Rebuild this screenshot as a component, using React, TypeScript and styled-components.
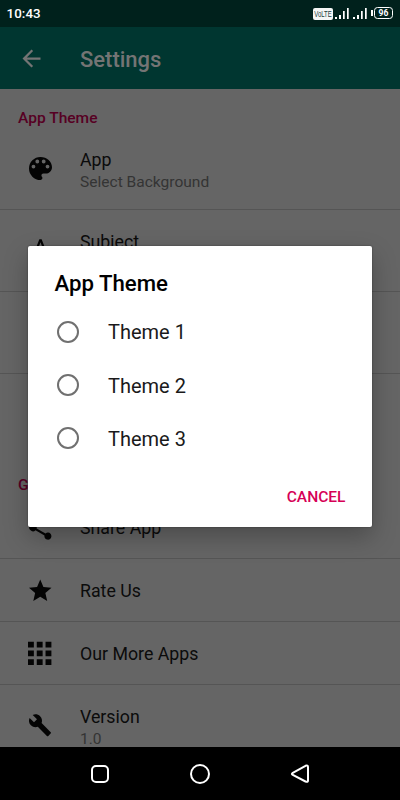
import React from "react";
import styled, { createGlobalStyle } from "styled-components";

const GlobalStyle = createGlobalStyle`
  *, *::before, *::after { box-sizing: border-box; }
  body { margin: 0; background: #656565; font-family: Roboto, sans-serif; overflow: hidden; }
`;

const Screen = styled.div`
  position: relative;
  display: flex;
  flex-direction: column;
  width: 400px;
  height: 800px;
  overflow: hidden;
  background: #656565;
`;

const StatusBar = styled.header`
  display: flex;
  align-items: center;
  justify-content: space-between;
  flex: none;
  height: 27px;
  padding: 0 7px 0 6.5px;
  background: #00211c;
`;

const Clock = styled.span`
  color: #fff;
  font-size: 13.3px;
  font-weight: 500;
  line-height: 27px;
  letter-spacing: 0.1px;
`;

const StatusIcons = styled.div`
  display: flex;
  align-items: center;
  height: 27px;
`;

const VolteBadge = styled.svg`
  width: 20px;
  height: 12px;
  margin-top: 1px;
  overflow: visible;
  font: 400 9px "Liberation Sans", sans-serif;
`;

const Signal = styled.svg`
  width: 14px;
  height: 11px;
  margin: 0 2.5px 0 1.5px;
  fill: #fff;
`;

const Battery = styled.span`
  position: relative;
  width: 19px;
  height: 12px;
  margin: -1px 0 0 5px;
  border: 1.5px solid #fff;
  border-radius: 3.5px;
  color: #fff;
  font-size: 8.5px;
  font-weight: 700;
  line-height: 10px;
  text-align: center;

  &::before {
    content: "";
    position: absolute;
    left: -4px;
    top: 2px;
    width: 1.5px;
    height: 6px;
    background: #fff;
  }
`;

const AppBar = styled.div`
  display: flex;
  align-items: center;
  flex: none;
  height: 62px;
  padding-left: 18px;
  background: #003630;
`;

const BackIcon = styled.svg`
  width: 27px;
  height: 27px;
  fill: #747474;
`;

const BarTitle = styled.h1`
  margin: 3px 0 0 35px;
  color: #747474;
  font-size: 22px;
  font-weight: 500;
`;

const Content = styled.main`
  flex: 1;
  min-height: 0;
  overflow: hidden;
`;

const SectionTitle = styled.h2<{ $height: number }>`
  height: ${(p) => p.$height}px;
  margin: 0;
  padding: 19px 0 0 18px;
  color: #570023;
  font-size: 15.55px;
  font-weight: 500;
  line-height: 20px;
`;

const Row = styled.div<{ $tall?: boolean; $divider?: boolean }>`
  display: flex;
  align-items: center;
  height: ${(p) => (p.$tall ? 82 : 63)}px;
  padding-left: 26px;
  border-bottom: 1px solid ${(p) => (p.$divider ? "#555" : "transparent")};
`;

const RowText = styled.div<{ $tall?: boolean }>`
  padding-top: ${(p) => (p.$tall ? 4 : 2)}px;
`;

const IconSlot = styled.div`
  display: flex;
  align-items: center;
  justify-content: center;
  width: 28px;
  height: 28px;
  margin-right: 26px;
`;

const Glyph = styled.svg<{ $size: number }>`
  flex: none;
  width: ${(p) => p.$size}px;
  height: ${(p) => p.$size}px;
  fill: #040404;
`;

const RowTitle = styled.div`
  color: #0b0b0b;
  font-size: 17.75px;
  line-height: 22px;
`;

const RowSummary = styled.div`
  min-height: 21px;
  margin-top: 1px;
  color: #343434;
  font-size: 15.55px;
  line-height: 21px;
`;

const NavBar = styled.nav`
  display: flex;
  align-items: center;
  justify-content: center;
  gap: 76px;
  flex: none;
  height: 53px;
  background: #000;
`;

const NavIcon = styled.svg`
  width: 24px;
  height: 24px;
  fill: none;
  stroke: #fff;
  stroke-width: 2;
  stroke-linejoin: round;
`;

const Overlay = styled.div`
  position: absolute;
  inset: 0;
  padding: 246px 28px 0;
`;

const Dialog = styled.section`
  height: 281px;
  padding: 22px 26.5px 0;
  border-radius: 2px;
  background: #fff;
  box-shadow: 0 10px 24px rgba(0, 0, 0, 0.26), 0 0 2px rgba(0, 0, 0, 0.4);
`;

const DialogTitle = styled.h2`
  height: 30px;
  margin: 0 0 7px;
  color: #000;
  font-size: 22.2px;
  font-weight: 500;
  line-height: 30px;
`;

const Option = styled.label`
  display: flex;
  align-items: center;
  height: 53.4px;
  color: #1a1a1a;
  font-size: 20px;
`;

const OptionText = styled.span`
  padding-top: 1px;
`;

const Radio = styled.span`
  width: 22px;
  height: 22px;
  margin: 0 29.5px 0 2px;
  border: 2px solid #707070;
  border-radius: 50%;
`;

const Actions = styled.div`
  display: flex;
  justify-content: flex-end;
  padding-top: 22px;
`;

const CancelButton = styled.button`
  padding: 0;
  border: 0;
  background: none;
  color: #d60056;
  font: 500 15.55px/20px Roboto, sans-serif;
`;

type IconDef = { path: string; box: string; size: number };

const icons: Record<string, IconDef> = {
  palette: {
    box: "3 3 18 18",
    size: 23,
    path: "M12 3a9 9 0 0 0 0 18c.83 0 1.5-.67 1.5-1.5 0-.39-.15-.74-.39-1.01-.23-.26-.38-.61-.38-.99 0-.83.67-1.5 1.5-1.5H16c2.76 0 5-2.24 5-5 0-4.42-4.03-8-9-8zm-5.5 9a1.5 1.5 0 1 1 0-3 1.5 1.5 0 0 1 0 3zm3-4a1.5 1.5 0 1 1 0-3 1.5 1.5 0 0 1 0 3zm5 0a1.5 1.5 0 1 1 0-3 1.5 1.5 0 0 1 0 3zm3 4a1.5 1.5 0 1 1 0-3 1.5 1.5 0 0 1 0 3z",
  },
  letter: {
    box: "0 0 24 24",
    size: 27,
    path: "M11 2 5.5 16h2.25l1.12-3h6.25l1.12 3h2.25L13 2h-2zm-1.38 9L12 4.67 14.38 11H9.62z",
  },
  share: {
    box: "3 2 18 20",
    size: 25,
    path: "M18 16.08c-.76 0-1.44.3-1.96.77L8.91 12.7c.05-.23.09-.46.09-.7s-.04-.47-.09-.7l7.05-4.11A3 3 0 1 0 15 5c0 .24.04.47.09.7L8.04 9.81a3 3 0 1 0 0 4.38l7.12 4.16a2.82 2.82 0 1 0 2.84-2.27z",
  },
  star: {
    box: "2 2 20 19",
    size: 22.5,
    path: "M12 17.27 18.18 21l-1.64-7.03L22 9.24l-7.19-.61L12 2 9.19 8.63 2 9.24l5.46 4.73L5.82 21z",
  },
  apps: {
    box: "4 3.5 16 16",
    size: 23.4,
    path: "M4 8h4V4H4v4zm6 12h4v-4h-4v4zm-6 0h4v-4H4v4zm0-6h4v-4H4v4zm6 0h4v-4h-4v4zm6-10v4h4V4h-4zm-6 4h4V4h-4v4zm6 6h4v-4h-4v4zm0 6h4v-4h-4v4z",
  },
  wrench: {
    box: "0 0.8 24 24",
    size: 24,
    path: "M22.7 19l-9.1-9.1c.9-2.3.4-5-1.5-6.9-2-2-5-2.4-7.4-1.3L9 6 6 9 1.6 4.7C.4 7.1.9 10.1 2.9 12.1c1.9 1.9 4.6 2.4 6.9 1.5l9.1 9.1c.4.4 1 .4 1.4 0l2.3-2.3c.5-.4.5-1.1.1-1.4z",
  },
};

type ItemProps = { icon?: string; title: string; summary?: string; tall?: boolean; divider?: boolean };

function Item({ icon, title, summary, tall, divider = true }: ItemProps) {
  const def = icon ? icons[icon] : undefined;
  return (
    <Row $tall={tall} $divider={divider}>
      <IconSlot>
        {def && (
          <Glyph $size={def.size} viewBox={def.box} overflow="visible">
            <path d={def.path} />
          </Glyph>
        )}
      </IconSlot>
      <RowText $tall={tall}>
        <RowTitle>{title}</RowTitle>
        {tall && <RowSummary>{summary}</RowSummary>}
      </RowText>
    </Row>
  );
}

function SignalBars() {
  return (
    <Signal viewBox="0 0 14 11">
      <path d="M0 9h2v2H0zM4 7h2v4H4zM8 3h1.7v8H8zM12 0h1.7v11H12z" />
    </Signal>
  );
}

export default function App() {
  return (
    <>
      <GlobalStyle />
      <Screen>
        <StatusBar>
          <Clock>10:43</Clock>
          <StatusIcons>
            <VolteBadge viewBox="0 0 20 12">
              <rect width="20" height="12" rx="2" fill="#f4f6f5" />
              <text x="1.3" y="9.3" textLength="17.4" lengthAdjust="spacingAndGlyphs" fill="#20403a">
                VoLTE
              </text>
            </VolteBadge>
            <SignalBars />
            <SignalBars />
            <Battery>96</Battery>
          </StatusIcons>
        </StatusBar>
        <AppBar>
          <BackIcon viewBox="0 0 24 24">
            <path d="M20 11H7.83l5.59-5.59L12 4l-8 8 8 8 1.41-1.41L7.83 13H20z" />
          </BackIcon>
          <BarTitle>Settings</BarTitle>
        </AppBar>
        <Content>
          <SectionTitle $height={39}>App Theme</SectionTitle>
          <Item icon="palette" title="App" summary="Select Background" tall />
          <Item icon="letter" title="Subject" tall />
          <Item title="" tall />
          <Item title="" tall divider={false} />
          <SectionTitle $height={40}>General</SectionTitle>
          <Item icon="share" title="Share App" />
          <Item icon="star" title="Rate Us" />
          <Item icon="apps" title="Our More Apps" />
          <Item icon="wrench" title="Version" summary="1.0" tall />
        </Content>
        <NavBar>
          <NavIcon viewBox="0 0 24 24">
            <rect x="4" y="4" width="16" height="16" rx="4" />
          </NavIcon>
          <NavIcon viewBox="0 0 24 24">
            <circle cx="12" cy="12" r="9" />
          </NavIcon>
          <NavIcon viewBox="0 0 24 24">
            <path d="M4.8 10.8 17.5 3.8Q20 3 20 5V18.5Q20 20.5 17.5 19.5L4.8 12.9Q3 12 4.8 10.8z" />
          </NavIcon>
        </NavBar>
        <Overlay>
          <Dialog role="dialog">
            <DialogTitle>App Theme</DialogTitle>
            {["Theme 1", "Theme 2", "Theme 3"].map((name) => (
              <Option key={name}>
                <Radio />
                <OptionText>{name}</OptionText>
              </Option>
            ))}
            <Actions>
              <CancelButton>CANCEL</CancelButton>
            </Actions>
          </Dialog>
        </Overlay>
      </Screen>
    </>
  );
}
